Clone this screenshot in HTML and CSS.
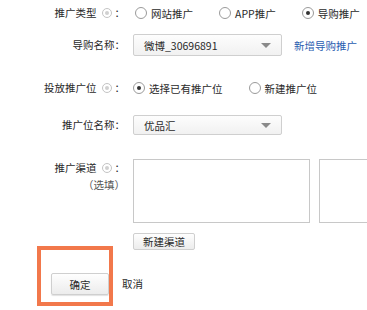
FILE: index.html
```html
<!DOCTYPE html>
<html lang="zh-CN">
<head>
<meta charset="utf-8">
<link rel="stylesheet" href="styles.css">
</head>
<body>
<div class="form">
  <div class="row r1">
    <div class="label">推广类型<span class="help"></span>：</div>
    <div class="controls">
      <span class="opt"><span class="radio"></span>网站推广</span>
      <span class="opt"><span class="radio"></span>APP推广</span>
      <span class="opt"><span class="radio on"></span>导购推广</span>
    </div>
  </div>
  <div class="row r2">
    <div class="label">导购名称：</div>
    <div class="controls">
      <div class="select"><span>微博_30696891</span><span class="arrow"></span></div>
      <a class="link">新增导购推广</a>
    </div>
  </div>
  <div class="row r3">
    <div class="label">投放推广位<span class="help"></span>：</div>
    <div class="controls">
      <span class="opt"><span class="radio on"></span>选择已有推广位</span>
      <span class="opt"><span class="radio"></span>新建推广位</span>
    </div>
  </div>
  <div class="row r4">
    <div class="label">推广位名称：</div>
    <div class="controls">
      <div class="select"><span>优品汇</span><span class="arrow"></span></div>
    </div>
  </div>
  <div class="row r5">
    <div class="label top">推广渠道<span class="help"></span>：<br><span class="opt-note">（选填）</span></div>
    <div class="controls top">
      <div class="box"></div>
      <div class="box wide"></div>
    </div>
  </div>
  <div class="row r6">
    <div class="label"></div>
    <div class="controls"><button class="btn small">新建渠道</button></div>
  </div>
  <div class="actions">
    <button class="btn ok">确定</button>
    <span class="cancel">取消</span>
    <div class="mark"></div>
  </div>
</div>
</body>
</html>
```

FILE: styles.css
```css
html, body {
  margin: 0;
  padding: 0;
  background: #fff;
  overflow: hidden;
}
body {
  width: 367px;
  height: 310px;
  font-family: "Noto Sans CJK SC", "Liberation Sans", sans-serif;
  font-size: 10.5px;
  color: #2a2a2a;
}
.form {
  position: relative;
  height: 310px;
}
.row {
  display: flex;
  align-items: center;
  gap: 8px;
}
.label {
  width: 125px;
  flex: none;
  text-align: right;
  white-space: nowrap;
  line-height: 16px;
}
.controls {
  display: flex;
  align-items: center;
  white-space: nowrap;
}
.help {
  display: inline-block;
  width: 10px;
  height: 10px;
  border: 1px solid #c4c4c4;
  border-radius: 50%;
  margin: 0 3px 0 5px;
  vertical-align: -1px;
  position: relative;
  box-sizing: border-box;
}
.help::after {
  content: "";
  position: absolute;
  left: 2px;
  top: 2px;
  width: 4px;
  height: 4px;
  border-radius: 50%;
  background: #d0d0d0;
}
.opt {
  display: inline-flex;
  align-items: center;
  margin-right: 24px;
}
.opt:last-child {
  margin-right: 0;
}
.r3 .opt {
  margin-right: 26px;
}
.radio {
  display: inline-block;
  width: 12px;
  height: 12px;
  border: 1px solid #9a9a9a;
  border-radius: 50%;
  box-sizing: border-box;
  margin-right: 4px;
  margin-left: 2px;
  position: relative;
  background: #fff;
}
.r3 .radio { margin-left: 0; }
.radio.on::after {
  content: "";
  position: absolute;
  left: 3px;
  top: 3px;
  width: 4px;
  height: 4px;
  border-radius: 50%;
  background: #333;
}
.r1 { height: 26px; }
.r2 { margin-top: 8px; }
.r3 { margin-top: 22px; height: 20px; }
.r4 { margin-top: 17px; }
.r5 { margin-top: 24px; align-items: flex-start; }
.r6 { margin-top: 10px; }
.select {
  width: 149px;
  height: 22px;
  box-sizing: border-box;
  border: 1px solid #cfcfcf;
  border-radius: 2px;
  background: linear-gradient(#fdfdfd, #f1f1f1);
  display: flex;
  align-items: center;
  justify-content: space-between;
  padding: 0 10px 0 10px;
}
.r4 .select { height: 20px; }
.arrow {
  width: 0;
  height: 0;
  border-left: 5px solid transparent;
  border-right: 5px solid transparent;
  border-top: 5px solid #8a8a8a;
}
.link {
  color: #2a5db0;
  margin-left: 12px;
}
.label.top {
  line-height: 17px;
}
.opt-note {
  color: #555;
}
.controls.top {
  align-items: flex-start;
  gap: 9px;
}
.box {
  width: 177px;
  height: 64px;
  box-sizing: border-box;
  border: 1px solid #c8c8c8;
  flex: none;
}
.box.wide {
  width: 48px;
  border-right: none;
}
.btn {
  font-family: inherit;
  font-size: 10.5px;
  color: #2a2a2a;
  border: 1px solid #cfcfcf;
  border-radius: 2px;
  background: linear-gradient(#fefefe, #ececec);
  padding: 0;
  box-sizing: border-box;
  cursor: pointer;
}
.btn.small {
  width: 62px;
  height: 17px;
  line-height: 15px;
}
.actions {
  display: flex;
  align-items: center;
  gap: 13px;
  margin-top: 23px;
  padding-left: 51px;
}
.btn.ok {
  width: 58px;
  height: 22px;
  box-shadow: 0 1px 1px rgba(0,0,0,0.12);
}
.cancel {
  margin-top: -2px;
}
.mark {
  position: absolute;
  left: 37px;
  top: 246px;
  width: 76px;
  height: 60px;
  box-sizing: border-box;
  border: 4px solid #f2784b;
}
```
